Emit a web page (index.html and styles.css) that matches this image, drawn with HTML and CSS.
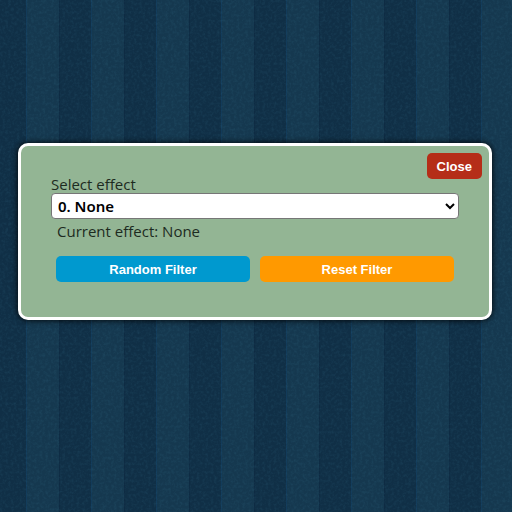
FILE: index.html
```html
<!DOCTYPE html>
<html lang="en">
<head>
    <meta charset="UTF-8">
    <meta name="viewport" content="width=device-width, initial-scale=1.0">
    <title>Select effect</title>
    <link rel="stylesheet" href="styles.css">
</head>
<body>

<svg class="grain" aria-hidden="true">
    <filter id="grain">
        <feTurbulence type="fractalNoise" baseFrequency="0.35" numOctaves="3" seed="4"/>
        <feColorMatrix values="0 0 0 0 0.1  0 0 0 0 0.42  0 0 0 0 0.6  1.6 0 0 0 -0.65"/>
    </filter>
    <rect width="100%" height="100%" filter="url(#grain)"/>
</svg>

<div class="popup">
    <button type="button" class="btn btn-close" id="closeBtn">Close</button>
    <label for="effect">Select effect</label>
    <select id="effect" class="effect-select">
        <option selected>0. None</option>
    </select>
    <p class="current">Current effect: <span id="current">None</span></p>
    <div class="buttons">
        <button type="button" class="btn btn-random">Random Filter</button>
        <button type="button" class="btn btn-reset" id="resetBtn">Reset Filter</button>
    </div>
</div>

</body>
</html>
```

FILE: styles.css
```css
* {
    box-sizing: border-box;
}
body {
    margin: 0;
    padding: 143px 20px 0 18px;
    min-height: 100vh;
    font-family: "Open Sans", "Noto Sans", sans-serif;
    font-size: 15px;
    line-height: 18px;
    color: #1d2b1f;
    background-color: #12324a;
    /* striped wallpaper */
    background-image: repeating-linear-gradient(90deg,
        #15384f 0, #15384f 32px,
        #0e2b43 32px, #0e2b43 33px,
        #102f46 33px, #102f46 64px,
        #123b5a 64px, #123b5a 65px);
    background-position: 27px 0;
    background-size: 65px 100%;
}
.grain {
    position: absolute;
    top: 0;
    left: 0;
    width: 100%;
    height: 100%;
    opacity: 0.12;
}
.popup {
    position: relative;
    padding: 29px 30px 35px;
    background-color: #93b594;
    border: 3px solid #fff;
    border-radius: 10px;
    box-shadow: 0 0 6px #000;
}
label {
    display: block;
}
.effect-select {
    display: block;
    width: 100%;
    height: 26px;
    padding: 0 2px;
    font-family: "Noto Sans", sans-serif;
    font-size: 15px;
    font-weight: 600;
    color: #000;
    background-color: #fff;
    border: 1px solid #767676;
    border-radius: 4px;
}
.current {
    margin: 3px 6px 16px;
}
.buttons {
    display: flex;
    gap: 10px;
    padding: 0 5px;
}
.btn {
    height: 26px;
    padding: 0 10px;
    font-family: "Liberation Sans", Arial, sans-serif;
    font-size: 13px;
    font-weight: bold;
    color: #fff;
    border: none;
    border-radius: 5px;
    cursor: pointer;
}
.btn-random {
    flex: 1;
    background-color: #0099cf;
}
.btn-reset {
    flex: 1;
    background-color: #ff9900;
}
.btn-close {
    position: absolute;
    top: 7px;
    right: 7px;
    background-color: #b52d18;
}
```
